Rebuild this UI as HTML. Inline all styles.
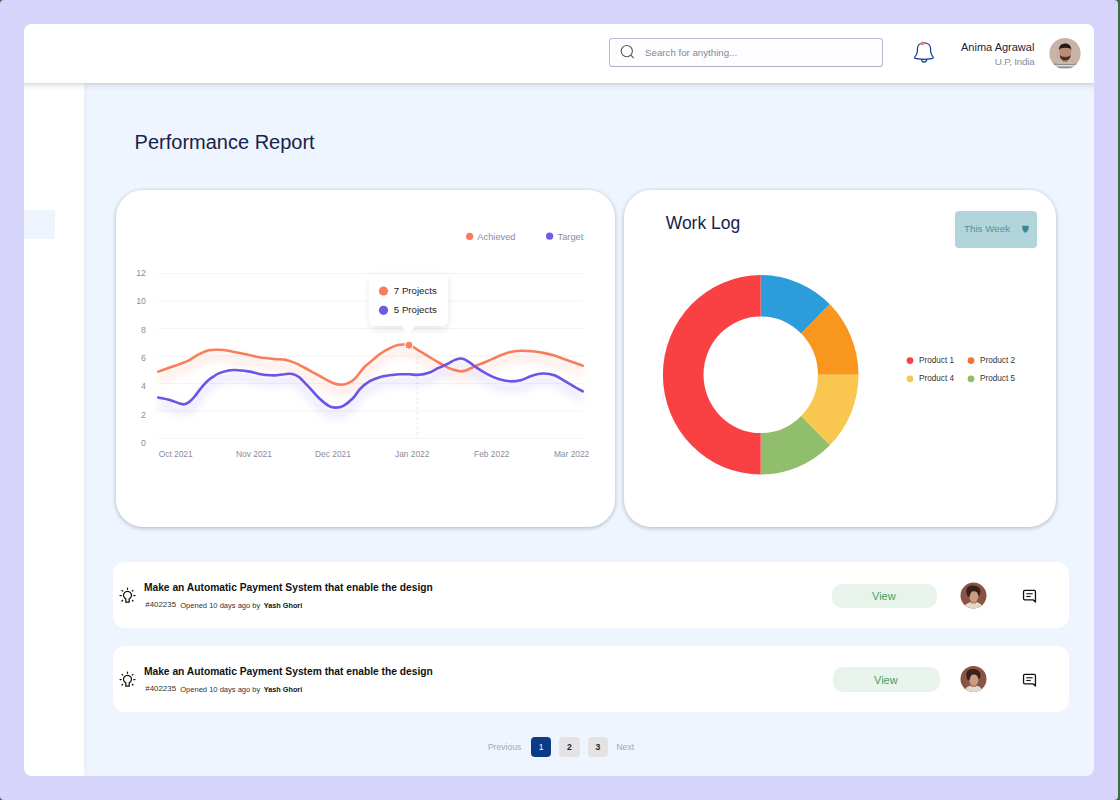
<!DOCTYPE html>
<html><head><meta charset="utf-8">
<style>
*{box-sizing:border-box;margin:0;padding:0}
html,body{width:1120px;height:800px;overflow:hidden;background:#3d6b45;font-family:"Liberation Sans",sans-serif}
#lav{position:absolute;left:0;top:0;width:1118px;height:800px;background:#d6d4fa;border-radius:4px}
#app{position:absolute;left:24px;top:24px;width:1070px;height:752px;background:#eff5fe;border-radius:8px;overflow:hidden}
#side{position:absolute;left:0;top:59px;width:60px;height:693px;background:#fff;box-shadow:1px 0 8px rgba(40,50,90,0.05)}
#sideact{position:absolute;left:0;top:127px;width:31px;height:28.5px;background:#edf4fe;border-radius:0 2px 2px 0}
#hdr{position:absolute;left:0;top:0;width:1070px;height:59px;background:#fff;z-index:2}
#hsh{position:absolute;left:0;top:59px;width:1070px;height:7px;background:linear-gradient(rgba(110,120,145,0.26),rgba(110,120,145,0.10) 40%,rgba(110,120,145,0))}
.card{position:absolute;background:#fff;border-radius:27px;box-shadow:0 1px 4.5px rgba(30,40,70,0.32)}
.row{position:absolute;background:#fff;border-radius:12px}
.t{position:absolute;line-height:1;white-space:nowrap}
.yl{position:absolute;line-height:1;white-space:nowrap;font-size:8.8px;color:#8a8d9c;text-align:right;width:20px;left:126px}
.xl{position:absolute;line-height:1;white-space:nowrap;font-size:8.4px;color:#8a8d9c;top:449.9px;width:50px;text-align:center}
.pl{position:absolute;line-height:1;white-space:nowrap;font-size:8.2px;color:#333}
.box{position:absolute}
svg{position:absolute;left:0;top:0}
</style></head><body>
<div id="lav"></div>
<div id="app">
  <div id="side"><div id="sideact"></div></div>
  <div id="hdr"></div><div id="hsh" style="z-index:2"></div>
</div>

<!-- header -->
<div class="box" style="left:609.3px;top:38px;width:273.3px;height:29px;border:1px solid #bcb8d0;border-bottom-color:#b0abc4;border-radius:3px;background:#fdfdff;z-index:3"></div>
<div class="t" style="left:645.1px;top:48.2px;font-size:9.7px;color:#858597;z-index:4">Search for anything...</div>
<div class="t" style="left:961px;top:41.7px;font-size:11px;color:#1e2340;z-index:4">Anima Agrawal</div>
<div class="t" style="left:994.8px;top:57.2px;font-size:9.9px;letter-spacing:-0.25px;color:#8c8c9c;z-index:4">U.P, India</div>

<div class="t" style="left:134.6px;top:131.6px;font-size:20px;color:#172347">Performance Report</div>

<div class="card" style="left:116px;top:189.5px;width:499px;height:337.5px"></div>
<div class="card" style="left:624px;top:189.5px;width:432px;height:337.5px"></div>
<div class="row" style="left:113px;top:562px;width:956px;height:66px"></div>
<div class="row" style="left:113px;top:646px;width:956px;height:66px"></div>

<!-- chart texts -->
<div class="t" style="left:477.3px;top:232.5px;font-size:9.3px;color:#8a8d9c">Achieved</div>
<div class="t" style="left:557.5px;top:232.5px;font-size:9.3px;color:#8a8d9c">Target</div>
<div class="yl" style="top:268.8px">12</div>
<div class="yl" style="top:297.1px">10</div>
<div class="yl" style="top:325.6px">8</div>
<div class="yl" style="top:353.9px">6</div>
<div class="yl" style="top:382.4px">4</div>
<div class="yl" style="top:410.6px">2</div>
<div class="yl" style="top:439.1px">0</div>

<div class="t" style="left:393.8px;top:285.8px;font-size:9.7px;color:#222;z-index:6">7 Projects</div>
<div class="t" style="left:393.8px;top:305.1px;font-size:9.7px;color:#222;z-index:6">5 Projects</div>
<div class="xl" style="left:150.7px">Oct 2021</div>
<div class="xl" style="left:229.0px">Nov 2021</div>
<div class="xl" style="left:308.0px">Dec 2021</div>
<div class="xl" style="left:387.2px">Jan 2022</div>
<div class="xl" style="left:466.8px">Feb 2022</div>
<div class="xl" style="left:546.6px">Mar 2022</div>
<!-- work log texts -->
<div class="t" style="left:665.7px;top:214.9px;font-size:17.5px;color:#172347">Work Log</div>
<div class="box" style="left:955.3px;top:210.8px;width:82px;height:37.2px;background:#b2d5dc;border-radius:4px"></div>
<div class="t" style="left:964px;top:224px;font-size:9.8px;color:#4f94a0">This Week</div>
<div class="pl" style="left:919px;top:356.6px">Product 1</div>
<div class="pl" style="left:980px;top:356.6px">Product 2</div>
<div class="pl" style="left:919px;top:374.5px">Product 4</div>
<div class="pl" style="left:980px;top:374.5px">Product 5</div>

<!-- rows -->
<div class="t" style="left:143.9px;top:582.7px;font-size:10.25px;font-weight:700;color:#111">Make an Automatic Payment System that enable the design</div>
<div class="t" style="left:145.3px;top:601.3px;font-size:7.9px;color:#333">#402235</div><div class="t" style="left:180.2px;top:601.6px;font-size:7.55px;color:#333">Opened 10 days ago by</div><div class="t" style="left:263.7px;top:601.8px;font-size:7.3px;font-weight:700;color:#111">Yash Ghori</div>
<div class="box" style="left:831.6px;top:583.7px;width:105px;height:24.3px;background:#e8f3ec;border-radius:10px"></div>
<div class="t" style="left:872px;top:591px;font-size:11px;color:#44a064">View</div>

<div class="t" style="left:143.9px;top:666.7px;font-size:10.25px;font-weight:700;color:#111">Make an Automatic Payment System that enable the design</div>
<div class="t" style="left:145.3px;top:685.3px;font-size:7.9px;color:#333">#402235</div><div class="t" style="left:180.2px;top:685.6px;font-size:7.55px;color:#333">Opened 10 days ago by</div><div class="t" style="left:263.7px;top:685.8px;font-size:7.3px;font-weight:700;color:#111">Yash Ghori</div>
<div class="box" style="left:832.8px;top:666.7px;width:107.2px;height:25.5px;background:#e8f3ec;border-radius:10px"></div>
<div class="t" style="left:874px;top:674.7px;font-size:11px;color:#44a064">View</div>

<!-- pagination -->
<div class="t" style="left:487.9px;top:742.7px;font-size:8.6px;color:#a8a8ad">Previous</div>
<div class="box" style="left:531.1px;top:736.9px;width:20.3px;height:20px;background:#0b3b86;border-radius:4px"></div>
<div class="box" style="left:559.3px;top:736.9px;width:20.3px;height:20px;background:#e3e3e3;border-radius:4px"></div>
<div class="box" style="left:587.9px;top:736.9px;width:20px;height:20px;background:#e3e3e3;border-radius:4px"></div>
<div class="t" style="left:531.1px;top:743px;width:20.3px;text-align:center;font-size:8.6px;color:#fff">1</div>
<div class="t" style="left:559.3px;top:743px;width:20.3px;text-align:center;font-size:8.6px;font-weight:700;color:#222">2</div>
<div class="t" style="left:587.9px;top:743px;width:20px;text-align:center;font-size:8.6px;font-weight:700;color:#222">3</div>
<div class="t" style="left:616.4px;top:742.7px;font-size:8.6px;color:#a8a8ad">Next</div>

<svg width="1120" height="800" viewBox="0 0 1120 800" style="z-index:5">
<defs>
  <filter id="glow" x="-10%" y="-50%" width="120%" height="200%"><feGaussianBlur stdDeviation="4"/></filter>
  <filter id="tsh" x="-50%" y="-50%" width="200%" height="200%"><feGaussianBlur stdDeviation="4"/></filter>
</defs>
<!-- search icon -->
<circle cx="626.8" cy="51.1" r="5.6" fill="none" stroke="#555" stroke-width="1.1"/>
<line x1="631" y1="55.3" x2="633.4" y2="57.6" stroke="#555" stroke-width="1.1" stroke-linecap="round"/>
<!-- bell -->
<path d="M914.6,57.4 C916.2,55.6 917.4,53.6 917.4,51 L917.4,48.6 C917.4,45 920.2,42.8 924,42.8 C927.8,42.8 930.6,45 930.6,48.6 L930.6,51 C930.6,53.6 932,55.6 933.2,57.4 C933.6,58 933,58.4 931.8,58.6 C929,59 927,59.3 924,59.3 C921,59.3 919,59 916.2,58.6 C915,58.4 914.3,58 914.6,57.4 Z" fill="none" stroke="#0b3a8c" stroke-width="1.2" stroke-linejoin="round"/>
<path d="M921.6,59.2 C921.8,61.2 922.8,62.2 924.2,62.2 C925.6,62.2 926.6,61.2 926.8,59.2" fill="none" stroke="#0b3a8c" stroke-width="1.2"/>
<circle cx="922.5" cy="43.4" r="1.9" fill="#f08080"/>
<!-- header avatar -->
<clipPath id="av1"><circle cx="1065" cy="53.5" r="15.6"/></clipPath>
<g clip-path="url(#av1)">
  <rect x="1049" y="37" width="32" height="33" fill="#c8b3a6"/>
  <ellipse cx="1065" cy="70" rx="14" ry="8" fill="#dcd8d4"/>
  <rect x="1050" y="63.6" width="30" height="1.4" fill="#8f8e94"/>
  <rect x="1050" y="66.6" width="30" height="1.4" fill="#8f8e94"/>
  <rect x="1050" y="69.4" width="30" height="1.4" fill="#8f8e94"/>
  <rect x="1062.5" y="57" width="5.5" height="5.5" fill="#b48a72"/>
  <ellipse cx="1065.2" cy="52.5" rx="5.8" ry="7" fill="#b98d73"/>
  <path d="M1059.6,55 C1060,59.5 1062.8,60.5 1065.2,60.5 C1067.6,60.5 1070.4,59.5 1070.8,55 C1069,57.5 1061.5,57.5 1059.6,55 Z" fill="#4a3128"/>
  <path d="M1059,50.5 C1058.6,45.5 1062,43.6 1065.2,43.6 C1069,43.6 1071.6,45.8 1071.2,51 L1070.3,48.6 C1067,47.6 1063,47.6 1060,48.8 Z" fill="#231a18"/>
</g>
<!-- legend dots -->
<circle cx="469.6" cy="236.4" r="3.6" fill="#fa7d5b"/>
<circle cx="549.6" cy="236.2" r="3.6" fill="#6e5ce6"/>
<!-- gridlines -->
<g stroke="#f3f4f7" stroke-width="1">
  <line x1="158" y1="273.5" x2="582" y2="273.5"/>
  <line x1="158" y1="301" x2="582" y2="301"/>
  <line x1="158" y1="328.5" x2="582" y2="328.5"/>
  <line x1="158" y1="356" x2="582" y2="356"/>
  <line x1="158" y1="383.5" x2="582" y2="383.5"/>
  <line x1="158" y1="411" x2="582" y2="411"/>
  <line x1="158" y1="438.5" x2="582" y2="438.5"/>
</g>
<line x1="417.3" y1="347" x2="417.3" y2="438" stroke="#dcdde3" stroke-width="0.8" stroke-dasharray="2.5,2.5"/>
<!-- glows -->
<g filter="url(#glow)" opacity="0.35">
  <path d="M158.3,371.6 C160.2,370.9 166.1,368.8 169.6,367.5 C173.1,366.2 176.2,365.3 179.5,364.1 C182.8,362.9 186.0,361.8 189.3,360.1 C192.6,358.5 195.8,355.8 199.1,354.2 C202.4,352.6 205.6,351.0 208.9,350.3 C212.2,349.6 215.5,349.7 218.8,349.8 C222.1,349.9 225.3,350.3 228.6,350.8 C231.9,351.3 235.1,352.2 238.4,352.8 C241.7,353.4 244.8,354.0 248.2,354.7 C251.6,355.4 254.6,356.5 259.0,357.2 C263.4,357.9 270.4,358.6 274.6,359.0 C278.9,359.4 281.2,359.0 284.5,359.6 C287.8,360.2 291.0,361.3 294.3,362.6 C297.6,363.9 300.8,365.8 304.1,367.5 C307.4,369.2 310.6,371.1 313.9,372.9 C317.2,374.7 320.5,376.6 323.8,378.3 C327.1,380.0 330.7,382.1 333.6,383.2 C336.5,384.3 338.9,384.7 341.4,384.7 C343.8,384.7 346.0,384.3 348.3,383.2 C350.6,382.1 352.6,380.9 355.2,378.3 C357.8,375.7 361.6,370.1 364.0,367.5 C366.4,364.9 367.2,364.7 369.8,362.5 C372.4,360.3 376.3,356.6 379.6,354.2 C382.9,351.8 386.2,349.9 389.5,348.3 C392.8,346.7 395.9,345.3 399.3,344.8 C402.7,344.3 406.3,344.3 409.6,345.3 C412.9,346.3 415.7,348.8 418.9,350.7 C422.1,352.6 425.5,354.6 428.8,356.6 C432.1,358.6 435.3,360.6 438.6,362.5 C441.9,364.4 445.1,366.5 448.4,367.9 C451.7,369.3 455.4,370.4 458.2,370.9 C461.0,371.4 462.0,371.6 465.0,370.7 C468.0,369.8 472.5,367.3 476.2,365.7 C479.9,364.1 483.6,362.8 487.3,361.2 C491.0,359.6 494.8,357.7 498.5,356.2 C502.2,354.7 505.9,353.2 509.6,352.3 C513.3,351.4 517.1,351.0 520.8,350.8 C524.5,350.6 528.3,350.9 532.0,351.2 C535.7,351.5 539.4,352.2 543.1,352.9 C546.8,353.6 550.6,354.5 554.3,355.6 C558.0,356.7 561.7,358.3 565.4,359.6 C569.1,360.9 573.7,362.5 576.6,363.5 C579.5,364.5 581.7,365.3 582.7,365.7" transform="translate(0,7)" fill="none" stroke="#ffb7a0" stroke-width="6"/>
  <path d="M158.3,397.5 C160.2,397.9 166.1,398.9 169.6,399.9 C173.1,400.9 177.0,402.7 179.5,403.4 C182.0,404.1 182.8,404.6 184.4,404.3 C186.0,404.1 187.7,403.1 189.3,401.9 C190.9,400.7 192.6,398.9 194.2,397.0 C195.8,395.1 197.5,392.7 199.1,390.6 C200.7,388.6 202.4,386.5 204.0,384.7 C205.6,382.9 207.2,381.2 208.9,379.8 C210.6,378.4 212.2,377.4 213.9,376.3 C215.6,375.2 216.4,374.4 218.8,373.4 C221.2,372.4 225.9,371.1 228.6,370.5 C231.3,369.9 231.7,369.9 235.0,370.0 C238.3,370.1 244.2,370.8 248.2,371.4 C252.2,372.0 256.2,373.3 259.0,373.9 C261.8,374.5 262.2,374.6 264.8,374.9 C267.4,375.1 271.3,375.5 274.6,375.4 C277.9,375.3 281.6,374.4 284.5,374.2 C287.4,373.9 289.9,373.4 292.3,373.9 C294.8,374.4 296.4,375.1 299.2,377.3 C302.0,379.5 305.7,383.8 309.0,387.2 C312.3,390.6 315.6,394.9 318.9,398.0 C322.2,401.1 325.9,404.2 328.7,405.8 C331.5,407.4 333.1,407.6 335.5,407.6 C337.9,407.6 340.4,407.4 343.4,405.8 C346.3,404.2 350.4,400.8 353.2,398.0 C356.0,395.2 357.2,391.8 360.0,389.0 C362.8,386.2 366.5,383.2 369.8,381.2 C373.1,379.2 376.3,378.2 379.6,377.2 C382.9,376.2 386.2,375.8 389.5,375.3 C392.8,374.8 396.0,374.5 399.3,374.3 C402.6,374.1 405.8,374.2 409.1,374.3 C412.4,374.4 415.6,375.1 418.9,374.8 C422.2,374.6 425.5,374.0 428.8,372.8 C432.1,371.6 435.3,369.4 438.6,367.9 C441.9,366.3 445.7,364.8 448.4,363.5 C451.1,362.2 452.8,360.7 455.0,359.9 C457.2,359.1 459.3,358.3 461.5,358.5 C463.7,358.7 465.6,359.8 468.0,361.3 C470.4,362.8 473.0,365.3 476.2,367.4 C479.4,369.5 483.6,372.2 487.3,374.1 C491.0,376.1 494.8,377.9 498.5,379.1 C502.2,380.3 505.9,381.1 509.6,381.3 C513.3,381.5 517.1,381.1 520.8,380.2 C524.5,379.3 528.3,376.8 532.0,375.7 C535.7,374.6 539.4,373.6 543.1,373.5 C546.8,373.4 550.6,373.9 554.3,375.2 C558.0,376.5 561.7,379.2 565.4,381.3 C569.1,383.4 573.7,386.3 576.6,388.0 C579.5,389.7 581.7,390.8 582.7,391.4" transform="translate(0,7)" fill="none" stroke="#b4abf5" stroke-width="6"/>
</g>
<path d="M158.3,371.6 C160.2,370.9 166.1,368.8 169.6,367.5 C173.1,366.2 176.2,365.3 179.5,364.1 C182.8,362.9 186.0,361.8 189.3,360.1 C192.6,358.5 195.8,355.8 199.1,354.2 C202.4,352.6 205.6,351.0 208.9,350.3 C212.2,349.6 215.5,349.7 218.8,349.8 C222.1,349.9 225.3,350.3 228.6,350.8 C231.9,351.3 235.1,352.2 238.4,352.8 C241.7,353.4 244.8,354.0 248.2,354.7 C251.6,355.4 254.6,356.5 259.0,357.2 C263.4,357.9 270.4,358.6 274.6,359.0 C278.9,359.4 281.2,359.0 284.5,359.6 C287.8,360.2 291.0,361.3 294.3,362.6 C297.6,363.9 300.8,365.8 304.1,367.5 C307.4,369.2 310.6,371.1 313.9,372.9 C317.2,374.7 320.5,376.6 323.8,378.3 C327.1,380.0 330.7,382.1 333.6,383.2 C336.5,384.3 338.9,384.7 341.4,384.7 C343.8,384.7 346.0,384.3 348.3,383.2 C350.6,382.1 352.6,380.9 355.2,378.3 C357.8,375.7 361.6,370.1 364.0,367.5 C366.4,364.9 367.2,364.7 369.8,362.5 C372.4,360.3 376.3,356.6 379.6,354.2 C382.9,351.8 386.2,349.9 389.5,348.3 C392.8,346.7 395.9,345.3 399.3,344.8 C402.7,344.3 406.3,344.3 409.6,345.3 C412.9,346.3 415.7,348.8 418.9,350.7 C422.1,352.6 425.5,354.6 428.8,356.6 C432.1,358.6 435.3,360.6 438.6,362.5 C441.9,364.4 445.1,366.5 448.4,367.9 C451.7,369.3 455.4,370.4 458.2,370.9 C461.0,371.4 462.0,371.6 465.0,370.7 C468.0,369.8 472.5,367.3 476.2,365.7 C479.9,364.1 483.6,362.8 487.3,361.2 C491.0,359.6 494.8,357.7 498.5,356.2 C502.2,354.7 505.9,353.2 509.6,352.3 C513.3,351.4 517.1,351.0 520.8,350.8 C524.5,350.6 528.3,350.9 532.0,351.2 C535.7,351.5 539.4,352.2 543.1,352.9 C546.8,353.6 550.6,354.5 554.3,355.6 C558.0,356.7 561.7,358.3 565.4,359.6 C569.1,360.9 573.7,362.5 576.6,363.5 C579.5,364.5 581.7,365.3 582.7,365.7" fill="none" stroke="#fa7d5b" stroke-width="2.6" stroke-linecap="round"/>
<path d="M158.3,397.5 C160.2,397.9 166.1,398.9 169.6,399.9 C173.1,400.9 177.0,402.7 179.5,403.4 C182.0,404.1 182.8,404.6 184.4,404.3 C186.0,404.1 187.7,403.1 189.3,401.9 C190.9,400.7 192.6,398.9 194.2,397.0 C195.8,395.1 197.5,392.7 199.1,390.6 C200.7,388.6 202.4,386.5 204.0,384.7 C205.6,382.9 207.2,381.2 208.9,379.8 C210.6,378.4 212.2,377.4 213.9,376.3 C215.6,375.2 216.4,374.4 218.8,373.4 C221.2,372.4 225.9,371.1 228.6,370.5 C231.3,369.9 231.7,369.9 235.0,370.0 C238.3,370.1 244.2,370.8 248.2,371.4 C252.2,372.0 256.2,373.3 259.0,373.9 C261.8,374.5 262.2,374.6 264.8,374.9 C267.4,375.1 271.3,375.5 274.6,375.4 C277.9,375.3 281.6,374.4 284.5,374.2 C287.4,373.9 289.9,373.4 292.3,373.9 C294.8,374.4 296.4,375.1 299.2,377.3 C302.0,379.5 305.7,383.8 309.0,387.2 C312.3,390.6 315.6,394.9 318.9,398.0 C322.2,401.1 325.9,404.2 328.7,405.8 C331.5,407.4 333.1,407.6 335.5,407.6 C337.9,407.6 340.4,407.4 343.4,405.8 C346.3,404.2 350.4,400.8 353.2,398.0 C356.0,395.2 357.2,391.8 360.0,389.0 C362.8,386.2 366.5,383.2 369.8,381.2 C373.1,379.2 376.3,378.2 379.6,377.2 C382.9,376.2 386.2,375.8 389.5,375.3 C392.8,374.8 396.0,374.5 399.3,374.3 C402.6,374.1 405.8,374.2 409.1,374.3 C412.4,374.4 415.6,375.1 418.9,374.8 C422.2,374.6 425.5,374.0 428.8,372.8 C432.1,371.6 435.3,369.4 438.6,367.9 C441.9,366.3 445.7,364.8 448.4,363.5 C451.1,362.2 452.8,360.7 455.0,359.9 C457.2,359.1 459.3,358.3 461.5,358.5 C463.7,358.7 465.6,359.8 468.0,361.3 C470.4,362.8 473.0,365.3 476.2,367.4 C479.4,369.5 483.6,372.2 487.3,374.1 C491.0,376.1 494.8,377.9 498.5,379.1 C502.2,380.3 505.9,381.1 509.6,381.3 C513.3,381.5 517.1,381.1 520.8,380.2 C524.5,379.3 528.3,376.8 532.0,375.7 C535.7,374.6 539.4,373.6 543.1,373.5 C546.8,373.4 550.6,373.9 554.3,375.2 C558.0,376.5 561.7,379.2 565.4,381.3 C569.1,383.4 573.7,386.3 576.6,388.0 C579.5,389.7 581.7,390.8 582.7,391.4" fill="none" stroke="#6a55e4" stroke-width="2.6" stroke-linecap="round"/>
<circle cx="409" cy="345.2" r="4" fill="#fa8060" stroke="#fff" stroke-width="1"/>
<!-- tooltip -->
<rect x="370" y="277" width="78" height="52" rx="6" fill="#000" opacity="0.10" filter="url(#tsh)"/>
<path d="M374.8,274 L442,274 Q448,274 448,280 L448,320 Q448,326 442,326 L414.5,326 L408,337.5 L402.5,326 L374.8,326 Q368.8,326 368.8,320 L368.8,280 Q368.8,274 374.8,274 Z" fill="#fff"/>
<circle cx="383.5" cy="291" r="4.6" fill="#fa7d5b"/>
<circle cx="383.5" cy="310.3" r="4.6" fill="#6a5ae6"/>
<!-- donut -->
<g transform="translate(760.7,0) scale(0.981,1) translate(-760.7,0)"><path fill="#2d9cdb" d="M760.70,275.10 A99.7,99.7 0 0 1 831.20,304.30 L801.92,333.58 A58.3,58.3 0 0 0 760.70,316.50 Z"/><path fill="#f8961e" d="M831.20,304.30 A99.7,99.7 0 0 1 860.40,374.80 L819.00,374.80 A58.3,58.3 0 0 0 801.92,333.58 Z"/><path fill="#f9c74f" d="M860.40,374.80 A99.7,99.7 0 0 1 831.20,445.30 L801.92,416.02 A58.3,58.3 0 0 0 819.00,374.80 Z"/><path fill="#90be6d" d="M831.20,445.30 A99.7,99.7 0 0 1 760.70,474.50 L760.70,433.10 A58.3,58.3 0 0 0 801.92,416.02 Z"/><path fill="#f94144" d="M760.70,474.50 A99.7,99.7 0 0 1 760.70,275.10 L760.70,316.50 A58.3,58.3 0 0 0 760.70,433.10 Z"/></g>
<!-- legend product dots -->
<circle cx="910" cy="360.6" r="3.4" fill="#f94144"/>
<circle cx="971" cy="360.6" r="3.4" fill="#f3722c"/>
<circle cx="910" cy="378.8" r="3.4" fill="#f9c74f"/>
<circle cx="971" cy="378.8" r="3.4" fill="#90be6d"/>
<!-- this week icon -->
<path d="M1022.1,225.8 L1028.8,225.8 L1028.4,229.2 C1027.7,231.4 1026.4,232.8 1025.45,232.8 C1024.5,232.8 1023.2,231.4 1022.5,229.2 Z" fill="#348a94"/>
<!-- bulbs -->
<g id="bulb" fill="none" stroke="#111" stroke-width="1.25" stroke-linecap="round">
  <path d="M125.8,598.9 L125.8,602.1 L129.2,602.1 L129.2,598.9 A4,4 0 1 0 125.8,598.9 Z"/>
  <line x1="127.5" y1="588" x2="127.5" y2="589.3"/>
  <line x1="120" y1="595.6" x2="121.2" y2="595.6"/>
  <line x1="133.8" y1="595.6" x2="135" y2="595.6"/>
  <line x1="122" y1="590.4" x2="122.7" y2="591.1"/>
  <line x1="133" y1="590.4" x2="132.3" y2="591.1"/>
  <line x1="122" y1="601" x2="122.7" y2="600.3"/>
  <line x1="133" y1="601" x2="132.3" y2="600.3"/>
</g>
<use href="#bulb" transform="translate(0,84)"/>
<!-- task avatars -->
<clipPath id="av2"><circle cx="973.5" cy="595.6" r="13"/></clipPath>
<g id="tav" clip-path="url(#av2)">
  <rect x="960" y="582" width="27" height="27" fill="#8b5346"/>
  <path d="M963,612 C964,604 968,602 973.5,602 C979,602 983,604 984,612 Z" fill="#e4d8cb"/>
  <path d="M970.5,598 L976.5,598 L976,603.5 L971,603.5 Z" fill="#b08068"/>
  <ellipse cx="973.8" cy="596" rx="4.6" ry="6" fill="#c59e84"/>
  <path d="M966.5,593 C965.5,588 968.5,585.6 972.5,585.6 C977.5,585.6 981,588 980.5,592.5 C980,595 979,596 978.3,595.5 C978,592 976,591 973,591.2 C971,591.5 970,594 969.5,597 C968,597 966.8,595.5 966.5,593 Z" fill="#3a2018"/>
</g>
<use href="#tav" transform="translate(0,83.4)"/>
<!-- comment icons -->
<g id="cmt" fill="none" stroke="#111" stroke-width="1.3" stroke-linejoin="round">
  <path d="M1024.8,590.45 L1034.2,590.45 Q1035.45,590.45 1035.45,591.7 L1035.45,602 L1033,599.85 L1024.8,599.85 Q1023.55,599.85 1023.55,598.6 L1023.55,591.7 Q1023.55,590.45 1024.8,590.45 Z"/>
  <line x1="1026.3" y1="593.75" x2="1032.7" y2="593.75" stroke-width="1.1"/>
  <line x1="1026.3" y1="596.5" x2="1030.7" y2="596.5" stroke-width="1.1"/>
</g>
<use href="#cmt" transform="translate(0,84)"/>
</svg>
</body></html>
